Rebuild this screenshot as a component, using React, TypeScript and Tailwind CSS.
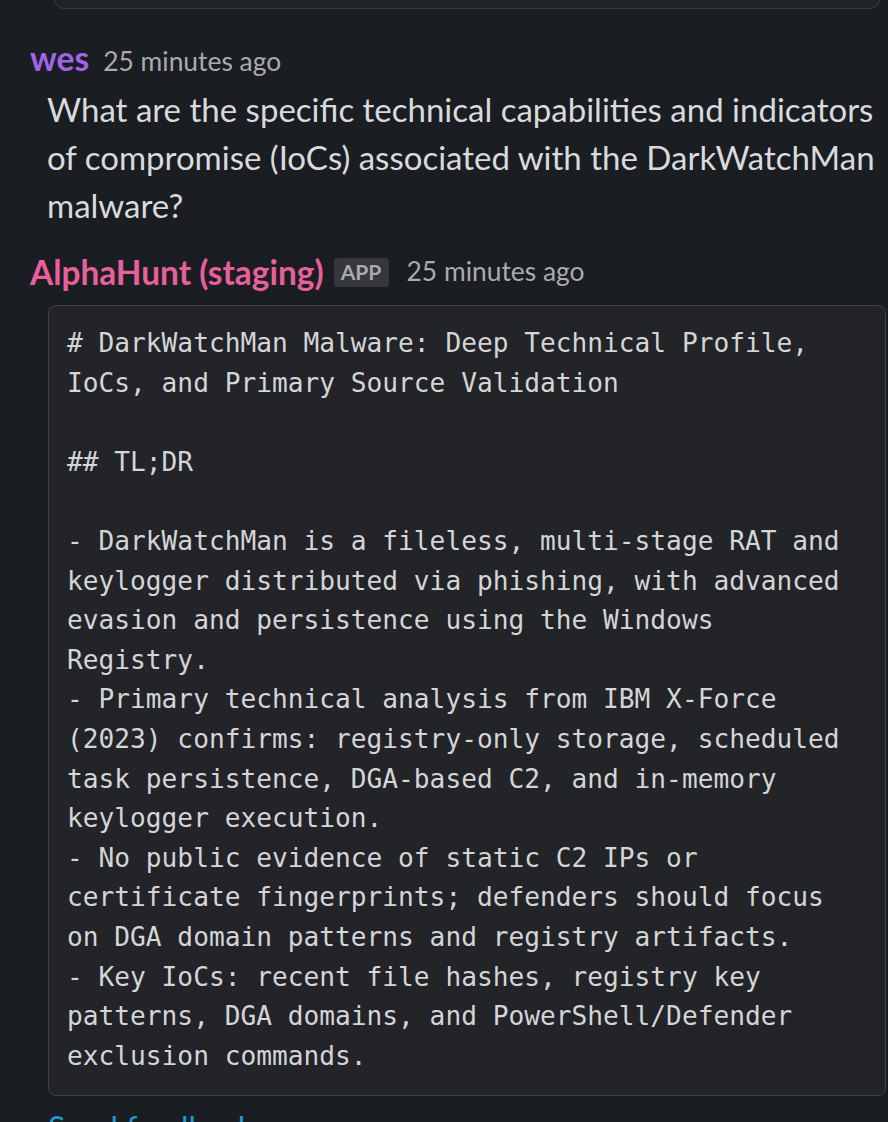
import React from 'react';

const codeLines = [
    '# DarkWatchMan Malware: Deep Technical Profile,',
    'IoCs, and Primary Source Validation',
    '',
    '## TL;DR',
    '',
    '- DarkWatchMan is a fileless, multi-stage RAT and',
    'keylogger distributed via phishing, with advanced',
    'evasion and persistence using the Windows',
    'Registry.',
    '- Primary technical analysis from IBM X-Force',
    '(2023) confirms: registry-only storage, scheduled',
    'task persistence, DGA-based C2, and in-memory',
    'keylogger execution.',
    '- No public evidence of static C2 IPs or',
    'certificate fingerprints; defenders should focus',
    'on DGA domain patterns and registry artifacts.',
    '- Key IoCs: recent file hashes, registry key',
    'patterns, DGA domains, and PowerShell/Defender',
    'exclusion commands.',
];

export default function App() {
    return (
        <div className="w-[888px] h-[1122px] overflow-hidden bg-[#1a1d21] text-[#d1d2d3] font-['Lato','Noto_Sans',sans-serif]">
            {/* tail of the previous code block */}
            <div className="ml-[54px] mr-[8px] -mt-[40px] h-[49px] rounded-[10px] border border-[#3b3d42] bg-[#212328]" />

            <div className="pl-[30px] pt-[29px]">
                <div className="flex items-baseline gap-[14px] h-[40px] leading-[40px]">
                    <span className="text-[33.5px] font-bold text-[#a065e6]">wes</span>
                    <span className="text-[26.4px] text-[#ababad]">25 minutes ago</span>
                </div>
                <p className="pl-[17px] mt-[7px] text-[33px] leading-[48px] text-[#d9dadb] whitespace-nowrap">
                    What are the specific technical capabilities and indicators
                    <br />
                    of compromise (IoCs) associated with the DarkWatchMan
                    <br />
                    malware?
                </p>
            </div>

            <div className="pl-[30px] pt-[23px]">
                <div className="flex items-center h-[40px]">
                    <span className="text-[33.4px] font-bold text-[#e8609b]">AlphaHunt (staging)</span>
                    <span className="ml-[10px] w-[55px] h-[29px] flex items-center justify-center rounded-[4px] bg-[#35373b] text-[21px] font-bold text-[#a9aaad]">APP</span>
                    <span className="ml-[18px] text-[26.4px] text-[#ababad]">25 minutes ago</span>
                </div>
                <div className="ml-[18px] mr-[2px] mt-[13px] rounded-[8px] border border-[#3f4146] bg-[#222428] pl-[18px] pt-[18px] pb-[19px]">
                    <pre className="font-['DejaVu_Sans_Mono','Liberation_Mono',monospace] text-[26.2px] leading-[39.6px] text-[#d4d5d6] whitespace-pre">
                        {codeLines.join('\n')}
                    </pre>
                </div>
                <div className="ml-[18px] mt-[12px] text-[32px] leading-[40px] text-[#1d9bd1]">Send feedback</div>
            </div>
        </div>
    );
}
